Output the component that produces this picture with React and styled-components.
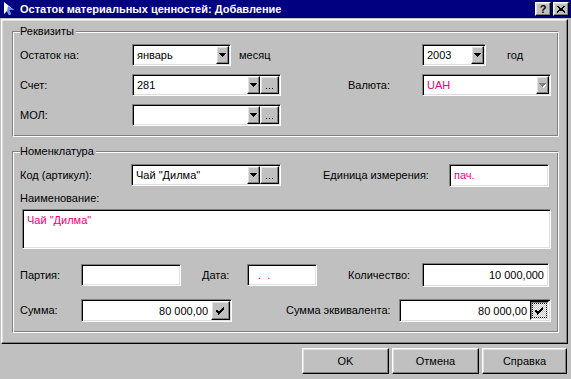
import styled, { createGlobalStyle, css } from 'styled-components'

const GlobalStyle = createGlobalStyle`
  html, body {
    margin: 0;
    padding: 0;
    background: #c0c0c0;
  }
  body {
    font-family: 'Liberation Sans', Arial, sans-serif;
    font-size: 11px;
    color: #000;
  }
`

// classic raised 3d edge (buttons)
const raised = css`
  border: 1px solid;
  border-color: #fff #000 #000 #fff;
  box-shadow: inset -1px -1px 0 #808080, inset 1px 1px 0 #dfdfdf;
`

const Window = styled.div`
  width: 571px;
  height: 379px;
  display: flex;
  flex-direction: column;
  background: #c0c0c0;
  overflow: hidden;
`

const TitleBar = styled.div`
  height: 18px;
  margin-bottom: 1px;
  background: #000080;
  display: flex;
  align-items: center;
  padding: 0 2px 0 3px;
`

const TitleText = styled.span`
  flex: 1;
  margin-left: 5px;
  color: #fff;
  font-weight: bold;
  font-size: 11px;
  white-space: nowrap;
`

const CaptionButton = styled.div`
  ${raised};
  box-sizing: border-box;
  width: 16px;
  height: 14px;
  margin-left: ${(p) => p.$ml || 0}px;
  background: #c0c0c0;
  display: flex;
  align-items: center;
  justify-content: center;
  font-weight: bold;
  font-size: 11px;
  line-height: 1;
`

const Panel = styled.div`
  box-sizing: border-box;
  width: 567px;
  height: 325px;
  margin-left: 1px;
  border: 1px solid;
  border-color: #fff #000 #000 #fff;
  box-shadow: inset -1px -1px 0 #808080, inset 1px 1px 0 #dfdfdf;
  padding: 5px 0 0 10px;
`

const Group = styled.fieldset`
  box-sizing: border-box;
  width: 547px;
  margin: ${(p) => p.$mt || 0}px 0 0 0;
  padding: ${(p) => p.$pt}px 7px ${(p) => p.$pb}px 7px;
  min-width: 0;
  border: 1px solid;
  border-color: #808080 #fff #fff #808080;
  box-shadow: inset 1px 1px 0 #fff, inset -1px -1px 0 #808080;
`

const Legend = styled.legend`
  padding: 0 2px 0 0;
  line-height: 13px;
  background: #c0c0c0;
`

const Row = styled.div`
  display: flex;
  align-items: center;
  height: ${(p) => p.$h || 22}px;
  margin-top: ${(p) => p.$mt || 0}px;
`

const Label = styled.span`
  flex-shrink: 0;
  width: ${(p) => (p.$w ? `${p.$w}px` : 'auto')};
  margin-left: ${(p) => p.$ml || 0}px;
  white-space: nowrap;
  line-height: 13px;
`

const Caption = styled.div`
  margin-top: ${(p) => p.$mt || 0}px;
  line-height: 13px;
`

const Field = styled.div`
  box-sizing: border-box;
  flex-shrink: 0;
  width: ${(p) => p.$w}px;
  height: ${(p) => p.$h || 22}px;
  margin-left: ${(p) => p.$ml || 0}px;
  margin-top: ${(p) => p.$mt || 0}px;
  border: 1px solid;
  border-color: #808080 #fff #fff #808080;
  box-shadow: inset 1px 1px 0 #000, inset -1px -1px 0 #dfdfdf;
  background: #fff;
  padding: 1px;
  display: flex;
  align-items: stretch;
`

const FieldText = styled.div`
  flex: 1;
  min-width: 0;
  padding: ${(p) => (p.$top ? '3px 3px 0 3px' : '0 3px')};
  display: flex;
  align-items: ${(p) => (p.$top ? 'flex-start' : 'center')};
  justify-content: ${(p) => (p.$right ? 'flex-end' : 'flex-start')};
  color: ${(p) => (p.$accent ? '#f0007c' : '#000')};
  white-space: pre;
  overflow: hidden;
`

const SmallButton = styled.div`
  ${raised};
  box-sizing: border-box;
  flex-shrink: 0;
  width: ${(p) => p.$w}px;
  background: #c0c0c0;
  display: flex;
  align-items: center;
  justify-content: center;
`

const Dots = styled.span`
  display: flex;
  gap: 2px;
  margin-top: 7px;
`

const Dot = styled.i`
  width: 1px;
  height: 1px;
  background: #000;
`

const PressedButton = styled.div`
  box-sizing: border-box;
  flex-shrink: 0;
  width: ${(p) => p.$w}px;
  border: 1px solid;
  border-color: #000 #fff #fff #000;
  box-shadow: inset 1px 1px 0 #808080;
  background: repeating-conic-gradient(#fff 0 25%, #c0c0c0 0 50%) 0 0 / 2px 2px;
  display: flex;
  align-items: center;
  justify-content: center;
  padding: 2px;
`

const FocusRect = styled.div`
  flex: 1;
  align-self: stretch;
  outline: 1px dotted #000;
  display: flex;
  align-items: center;
  justify-content: center;
`

const Footer = styled.div`
  flex: 1;
  display: flex;
  justify-content: flex-end;
  align-items: flex-start;
  gap: 3px;
  padding: 4px 4px 0 0;
`

const Button = styled.div`
  ${raised};
  box-sizing: border-box;
  width: ${(p) => p.$w || 87}px;
  height: 26px;
  display: flex;
  align-items: center;
  justify-content: center;
`

function Arrow({ disabled }) {
  return (
    <svg width="7" height="5" viewBox="0 0 7 5" shapeRendering="crispEdges">
      {disabled && <polygon points="1,1 8,1 4.5,5" fill="#fff" />}
      <polygon points="0,0 7,0 3.5,4" fill={disabled ? '#808080' : '#000'} />
    </svg>
  )
}

function Check() {
  return (
    <svg width="9" height="8" viewBox="0 0 9 8" shapeRendering="crispEdges">
      <path d="M1 3 L3 6 L8 0 M1 4 L3 7 L8 1" stroke="#000" strokeWidth="1.4" fill="none" />
    </svg>
  )
}

function Combo({ w, value, accent, dots, disabled }) {
  return (
    <Field $w={w}>
      <FieldText $accent={accent}>{value}</FieldText>
      <SmallButton $w={13}>
        <Arrow disabled={disabled} />
      </SmallButton>
      {dots && (
        <SmallButton $w={19}>
          <Dots>
            <Dot />
            <Dot />
            <Dot />
          </Dots>
        </SmallButton>
      )}
    </Field>
  )
}

function TitleIcon() {
  return (
    <svg width="12" height="14" viewBox="0 0 12 14">
      <polygon points="1,0 1,12 4,9 6,13 8,12 6,8 11,8" fill="#fff" />
      <polygon points="5,4 11,8 6,8 8,12 6,13 4,9" fill="#5a8cff" />
    </svg>
  )
}

export default function App() {
  return (
    <>
      <GlobalStyle />
      <Window>
        <TitleBar>
          <TitleIcon />
          <TitleText>Остаток материальных ценностей: Добавление</TitleText>
          <CaptionButton>?</CaptionButton>
          <CaptionButton $ml={2}>
            <svg width="8" height="7" viewBox="0 0 8 7" shapeRendering="crispEdges">
              <path d="M0 0 L8 7 M1 0 L9 7 M8 0 L0 7 M7 0 L-1 7" stroke="#000" strokeWidth="1" />
            </svg>
          </CaptionButton>
        </TitleBar>

        <Panel>
          <Group $pt={6} $pb={10}>
            <Legend>Реквизиты</Legend>
            <Row>
              <Label $w={112}>Остаток на:</Label>
              <Combo w={99} value="январь" />
              <Label $ml={8} $w={183}>месяц</Label>
              <Combo w={64} value="2003" />
              <Label $ml={21}>год</Label>
            </Row>
            <Row $mt={8}>
              <Label $w={112}>Счет:</Label>
              <Combo w={149} value="281" dots />
              <Label $ml={67} $w={74}>Валюта:</Label>
              <Combo w={129} value="UAH" accent disabled />
            </Row>
            <Row $mt={8}>
              <Label $w={112}>МОЛ:</Label>
              <Combo w={149} value="" dots />
            </Row>
          </Group>

          <Group $mt={8} $pt={6} $pb={10}>
            <Legend>Номенклатура</Legend>
            <Row>
              <Label $w={111}>Код (артикул):</Label>
              <Combo w={150} value={'Чай "Дилма"'} dots />
              <Label $ml={42} $w={126}>Единица измерения:</Label>
              <Field $w={100} $h={23}>
                <FieldText $accent>пач.</FieldText>
              </Field>
            </Row>
            <Caption $mt={6}>Наименование:</Caption>
            <Field $w={529} $h={40} $ml={2} $mt={4}>
              <FieldText $accent $top>{'Чай "Дилма"'}</FieldText>
            </Field>
            <Row $mt={15}>
              <Label $w={61}>Партия:</Label>
              <Field $w={100}>
                <FieldText />
              </Field>
              <Label $ml={21} $w={45}>Дата:</Label>
              <Field $w={70}>
                <FieldText $accent>{'  .  .'}</FieldText>
              </Field>
              <Label $ml={31} $w={74}>Количество:</Label>
              <Field $w={127} $h={24}>
                <FieldText $right>10 000,000</FieldText>
              </Field>
            </Row>
            <Row $mt={13} $h={23}>
              <Label $w={61}>Сумма:</Label>
              <Field $w={151} $h={23}>
                <FieldText $right>80 000,00</FieldText>
                <SmallButton $w={19}>
                  <Check />
                </SmallButton>
              </Field>
              <Label $ml={54} $w={113}>Сумма эквивалента:</Label>
              <Field $w={152} $h={23}>
                <FieldText $right>80 000,00</FieldText>
                <PressedButton $w={19}>
                  <FocusRect>
                    <Check />
                  </FocusRect>
                </PressedButton>
              </Field>
            </Row>
          </Group>
        </Panel>

        <Footer>
          <Button>OK</Button>
          <Button>Отмена</Button>
          <Button $w={85}>Справка</Button>
        </Footer>
      </Window>
    </>
  )
}
